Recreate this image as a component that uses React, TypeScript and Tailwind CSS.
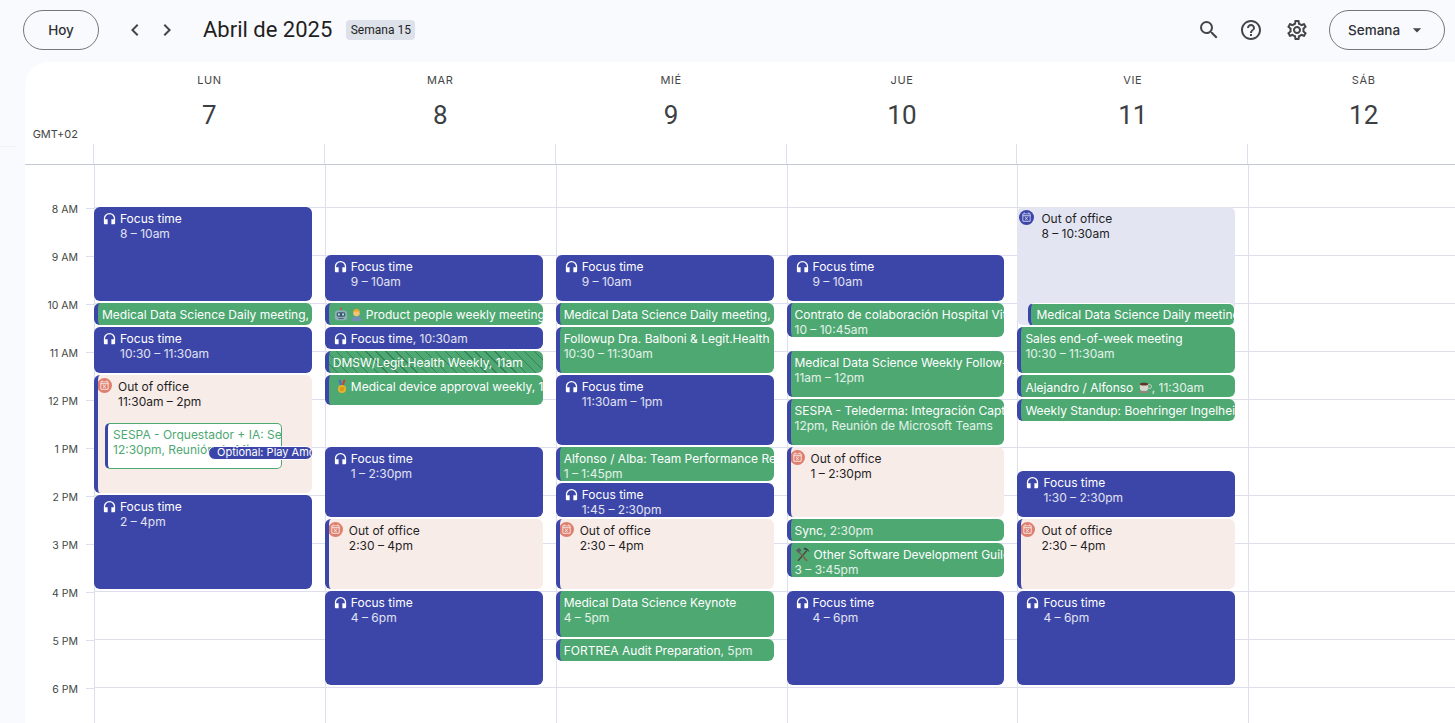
import React from 'react';
import { MdChevronLeft, MdChevronRight, MdSearch, MdHelpOutline, MdOutlineSettings, MdArrowDropDown, MdHeadphones, MdOutlineEventBusy } from 'react-icons/md';

const DAY_HEADS = [
  { name: 'LUN', num: 7 },
  { name: 'MAR', num: 8 },
  { name: 'MIÉ', num: 9 },
  { name: 'JUE', num: 10 },
  { name: 'VIE', num: 11 },
  { name: 'SÁB', num: 12 },
  { name: 'DOM', num: 13 },
];

const HOURS = ['8 AM', '9 AM', '10 AM', '11 AM', '12 PM', '1 PM', '2 PM', '3 PM', '4 PM', '5 PM', '6 PM'];

const RobotEmoji = () => (
  <svg viewBox="0 0 16 16" className="ml-[1px] w-[14px] h-[15px] shrink-0">
    <rect x="7.200" y="0.500" width="1.600" height="3" fill="#8a8f96" />
    <circle cx="8" cy="1.300" r="1.300" fill="#c8553d" />
    <rect x="1" y="3.500" width="14" height="11" rx="3.500" fill="#8fb0bb" />
    <rect x="3" y="5.500" width="10" height="5" rx="2" fill="#3f5561" />
    <circle cx="5.600" cy="8" r="1.300" fill="#9fe3f5" />
    <circle cx="10.400" cy="8" r="1.300" fill="#9fe3f5" />
    <rect x="5" y="12" width="6" height="1.200" fill="#51666f" />
  </svg>
);

const PersonEmoji = () => (
  <svg viewBox="0 0 16 16" className="w-[13px] h-[15px] shrink-0">
    <path d="M1.500 16c0-4 2.500-5.500 6.500-5.500s6.500 1.500 6.500 5.500z" fill="#6f8fb5" />
    <circle cx="8" cy="6" r="4" fill="#f2c27a" />
    <path d="M3.800 6C3.500 2.500 5.500 1 8 1s4.500 1.500 4.200 5C11 4.500 9.500 4 8 4S5 4.500 3.800 6z" fill="#e0a92e" />
  </svg>
);

const MedalEmoji = () => (
  <svg viewBox="0 0 12 16" className="ml-[4px] w-[10px] h-[15px] shrink-0">
    <path d="M1.500 0H4.500L6 6 4.500 8z" fill="#4d6fc4" />
    <path d="M10.500 0H7.500L6 6 7.500 8z" fill="#c9443b" />
    <circle cx="6" cy="11" r="4.800" fill="#eab32d" />
    <circle cx="6" cy="11" r="2.800" fill="#d39a1c" />
  </svg>
);

const ToolsEmoji = () => (
  <svg viewBox="0 0 16 16" className="w-[15px] h-[15px] shrink-0">
    <path d="M2.500 14.500 12 3.500l1 1-9 10.500z" fill="#4a4642" />
    <path d="M13.500 14.500 4 4 3 5l9 10.500z" fill="#7a6450" />
    <path d="M9 1c2.500-.5 5.500 1 6.500 4.500C14 4 12 3 10 3z" fill="#3f4449" />
    <path d="M.8 3.500 4.500.8 7 3.800 3.500 6.500z" fill="#585f66" />
  </svg>
);

const CoffeeEmoji = () => (
  <svg viewBox="0 0 16 16" className="inline-block w-[15px] h-[15px] align-[-2px]">
    <path d="M3 5h9v4a4 4 0 0 1-4 4H7a4 4 0 0 1-4-4z" fill="#d9d6d0" />
    <ellipse cx="7.500" cy="5.500" rx="4.500" ry="1.500" fill="#5c3a24" />
    <path d="M12 6h1.500a1.500 1.500 0 0 1 0 4H12" fill="none" stroke="#d8d4cc" strokeWidth="1" />
    <ellipse cx="7.500" cy="13.800" rx="6.500" ry="1.200" fill="#8f8a80" />
  </svg>
);

type CalEvent = {
  kind: 'focus' | 'green' | 'ooo' | 'away' | 'stripe';
  from: number;
  to: number;
  title?: React.ReactNode;
  time?: string;
  inline?: string;
  icon?: React.ReactNode;
  height?: number;
};

const focus = (from: number, to: number, time: string): CalEvent => ({ kind: 'focus', from, to, time });
const ooo = (from: number, to: number, time: string): CalEvent => ({ kind: 'ooo', from, to, time });

const WEEK: CalEvent[][] = [
  [
    focus(8, 10, '8 – 10am'),
    { kind: 'green', from: 10, to: 10.5, title: 'Medical Data Science Daily meeting, 10am' },
    focus(10.5, 11.5, '10:30 – 11:30am'),
    ooo(11.5, 14, '11:30am – 2pm'),
    focus(14, 16, '2 – 4pm'),
  ],
  [
    focus(9, 10, '9 – 10am'),
    {
      kind: 'green',
      from: 10,
      to: 10.5,
      title: 'Product people weekly meeting, 10am',
      icon: (
        <span className="flex gap-[2px] mr-[-1px]">
          <RobotEmoji />
          <PersonEmoji />
        </span>
      ),
    },
    { kind: 'focus', from: 10.5, to: 11, inline: '10:30am' },
    { kind: 'stripe', from: 11, to: 11.5, title: 'DMSW/Legit.Health Weekly, 11am' },
    { kind: 'green', from: 11.5, to: 12, height: 30, title: 'Medical device approval weekly, 11:30am', icon: <MedalEmoji /> },
    focus(13, 14.5, '1 – 2:30pm'),
    ooo(14.5, 16, '2:30 – 4pm'),
    focus(16, 18, '4 – 6pm'),
  ],
  [
    focus(9, 10, '9 – 10am'),
    { kind: 'green', from: 10, to: 10.5, title: 'Medical Data Science Daily meeting, 10am' },
    { kind: 'green', from: 10.5, to: 11.5, title: 'Followup Dra. Balboni & Legit.Health', time: '10:30 – 11:30am' },
    focus(11.5, 13, '11:30am – 1pm'),
    { kind: 'green', from: 13, to: 13.75, title: 'Alfonso / Alba: Team Performance Review', time: '1 – 1:45pm' },
    focus(13.75, 14.5, '1:45 – 2:30pm'),
    ooo(14.5, 16, '2:30 – 4pm'),
    { kind: 'green', from: 16, to: 17, title: 'Medical Data Science Keynote', time: '4 – 5pm' },
    { kind: 'green', from: 17, to: 17.5, title: 'FORTREA Audit Preparation', inline: '5pm' },
  ],
  [
    focus(9, 10, '9 – 10am'),
    { kind: 'green', from: 10, to: 10.75, title: 'Contrato de colaboración Hospital Vithas', time: '10 – 10:45am' },
    { kind: 'green', from: 11, to: 12, title: 'Medical Data Science Weekly Follow-up', time: '11am – 12pm' },
    { kind: 'green', from: 12, to: 13, title: 'SESPA - Telederma: Integración Captura', time: '12pm, Reunión de Microsoft Teams' },
    ooo(13, 14.5, '1 – 2:30pm'),
    { kind: 'green', from: 14.5, to: 15, title: 'Sync', inline: '2:30pm' },
    { kind: 'green', from: 15, to: 15.75, title: 'Other Software Development Guild', time: '3 – 3:45pm', icon: <ToolsEmoji /> },
    focus(16, 18, '4 – 6pm'),
  ],
  [
    { kind: 'away', from: 8, to: 10.5, time: '8 – 10:30am' },
    { kind: 'green', from: 10.5, to: 11.5, title: 'Sales end-of-week meeting', time: '10:30 – 11:30am' },
    {
      kind: 'green',
      from: 11.5,
      to: 12,
      title: (
        <>
          Alejandro / Alfonso <CoffeeEmoji />
        </>
      ),
      inline: '11:30am',
    },
    { kind: 'green', from: 12, to: 12.5, title: 'Weekly Standup: Boehringer Ingelheim' },
    focus(13.5, 14.5, '1:30 – 2:30pm'),
    ooo(14.5, 16, '2:30 – 4pm'),
    focus(16, 18, '4 – 6pm'),
  ],
  [],
  [],
];

const EventCard = ({ ev }: { ev: CalEvent }) => {
  const top = (ev.from - 8) * 48 + 42;
  const height = ev.height ?? (ev.to - ev.from) * 48 - 2;
  const base = 'absolute -left-px w-[217.9px] rounded-[6px] overflow-hidden pt-[4px] text-[12px] leading-[15px] whitespace-nowrap';
  const style = { top, height };

  if (ev.kind === 'focus') {
    return (
      <div className={`${base} bg-[#3c46a8] text-white pl-[8px]`} style={style}>
        <div className="flex items-center gap-[3px]">
          <MdHeadphones className="w-[15px] h-[15px] -my-px shrink-0" />
          <span>
            Focus time{ev.inline && <span className="text-white/85">, {ev.inline}</span>}
          </span>
        </div>
        {ev.time && <div className="pl-[18px] text-white/85">{ev.time}</div>}
      </div>
    );
  }

  if (ev.kind === 'ooo' || ev.kind === 'away') {
    const away = ev.kind === 'away';
    return (
      <div
        className={`${base} text-[#1f1f1f] ${away ? 'bg-[#e3e5f3] pl-[24px]' : 'bg-[#f8ece9] border-l-[4px] border-[#3c46a8] pl-[20px]'}`}
        style={style}
      >
        <div
          className={`absolute top-[3px] w-[15px] h-[15px] rounded-full flex items-center justify-center ${
            away ? 'left-[2px] bg-[#3c46a8] text-[#cfd3f0]' : 'left-[-1px] bg-[#df7f6e] text-[#f8ece9]'
          }`}
        >
          <MdOutlineEventBusy className="w-[11px] h-[11px]" />
        </div>
        <div>Out of office</div>
        <div>{ev.time}</div>
      </div>
    );
  }

  return (
    <div
      className={`${base} border-l-[4px] border-[#3c46a8] text-white pl-[4px] ${
        ev.kind === 'stripe'
          ? 'bg-[repeating-linear-gradient(45deg,#4ea872,#4ea872_6px,#37805a_6px,#37805a_7px)]'
          : 'bg-[#4ea872]'
      }`}
      style={style}
    >
      <div className="flex items-center gap-[4px]">
        {ev.icon}
        <span>
          {ev.title}
          {ev.inline && <span className="text-white/85">, {ev.inline}</span>}
        </span>
      </div>
      {ev.time && <div className="text-white/85">{ev.time}</div>}
    </div>
  );
};

const App: React.FC = () => {
  return (
    <div className="w-[1455px] h-[723px] overflow-hidden bg-[#f8fafd] flex flex-col font-['Inter',sans-serif]">
      {/* Top bar */}
      <header className="h-[62px] shrink-0 flex items-start pt-[10px] pl-[23px] pr-[10px]">
        <button className="w-[76px] h-[40px] rounded-full border border-[#747775] text-[13.5px] font-medium text-[#303236]">Hoy</button>
        <MdChevronLeft className="ml-[24px] mt-[8px] w-[24px] h-[24px] text-[#444746]" />
        <MdChevronRight className="ml-[8px] mt-[8px] w-[24px] h-[24px] text-[#444746]" />
        <h1 className="ml-[24px] h-[40px] leading-[39px] text-[22px] text-[#1f1f1f] font-normal font-['Roboto',sans-serif]">Abril de 2025</h1>
        <span className="ml-[14px] mt-[10px] h-[20px] w-[69px] rounded-[4px] bg-[#dde1e9] text-[12px] leading-[20px] text-center text-[#1f1f1f] whitespace-nowrap font-['Roboto',sans-serif]">Semana 15</span>
        <div className="ml-auto flex items-center h-[40px]">
          <MdSearch className="w-[24px] h-[24px] text-[#444746]" />
          <MdHelpOutline className="ml-[18px] w-[24px] h-[24px] text-[#444746]" />
          <MdOutlineSettings className="ml-[22px] w-[24px] h-[24px] text-[#444746]" />
          <button className="ml-[20px] w-[116px] h-[40px] rounded-full border border-[#747775] text-[13.5px] font-medium text-[#303236] flex items-center pl-[18px]">
            Semana
            <MdArrowDropDown className="ml-[7px] w-[20px] h-[20px] text-[#444746]" />
          </button>
        </div>
      </header>

      <div className="flex flex-1 min-h-0">
        {/* Collapsed side rail */}
        <div className="w-[25px] shrink-0 pt-[84px]">
          <div className="h-px w-[16px] bg-[#f0f2f6]" />
        </div>

        {/* Calendar card */}
        <main className="flex-1 min-w-0 bg-white rounded-tl-[24px] overflow-hidden flex flex-col">
          <div className="flex h-[82px] shrink-0">
            <div className="w-[69px] shrink-0 flex items-end justify-end pr-[16px] pb-[3px] text-[11px] leading-[14px] text-[#444746]">GMT+02</div>
            {DAY_HEADS.map((d) => (
              <div key={d.name} className="w-[230.85px] shrink-0 flex flex-col items-center pt-[11px]">
                <div className="text-[11px] leading-[14px] tracking-[0.6px] text-[#444746]">{d.name}</div>
                <div className="mt-[10px] text-[26px] leading-[36px] text-[#3c4043] font-['Roboto',sans-serif]">{d.num}</div>
              </div>
            ))}
          </div>

          {/* All-day row */}
          <div className="flex h-[21px] shrink-0 border-b border-[#c4c7d5]">
            <div className="w-[68px] shrink-0" />
            {DAY_HEADS.map((d) => (
              <div key={d.name} className="w-[230.85px] shrink-0 border-l border-[#dde0ec]" />
            ))}
          </div>

          {/* Hour grid */}
          <div className="flex flex-1 min-h-0 overflow-hidden">
            <div className="w-[69px] shrink-0 text-[10.5px] leading-[14px] text-[#444746]">
              <div className="h-[43px] relative">
                <div className="absolute right-[16px] top-[-10px] whitespace-nowrap">7 AM</div>
                <div className="absolute right-0 bottom-[-1px] w-[8px] h-px bg-[#dde0ec]" />
              </div>
              {HOURS.map((h) => (
                <div key={h} className="h-[48px] relative">
                  <div className="absolute right-[16px] top-[-5px] whitespace-nowrap">{h}</div>
                  <div className="absolute right-0 bottom-[-1px] w-[8px] h-px bg-[#dde0ec]" />
                </div>
              ))}
            </div>
            {WEEK.map((events, i) => (
              <div key={i} className="relative w-[230.85px] shrink-0 border-l border-[#dde0ec]">
                <div className="h-[43px] border-b border-[#dde0ec]" />
                {HOURS.map((h) => (
                  <div key={h} className="h-[48px] border-b border-[#dde0ec]" />
                ))}

                {events.map((ev, j) => (
                  <EventCard key={j} ev={ev} />
                ))}

                {i === 0 && (
                  <>
                    <div className="absolute left-[10px] top-[258px] w-[177px] h-[46px] rounded-[5px] bg-white border border-[#4ea872] border-l-[3px] border-l-[#3c46a8] text-[#4ea872] text-[12px] leading-[15px] pl-[5px] pt-[3px] overflow-hidden whitespace-nowrap">
                      <div>SESPA - Orquestador + IA: Seguimiento</div>
                      <div>12:30pm, Reunión de Microsoft Teams</div>
                    </div>
                    <div className="absolute left-[113px] top-[281px] w-[105px] h-[14px] rounded-[7px] bg-[#3c46a8] border border-white text-white text-[11px] leading-[11px] pl-[8px] overflow-hidden whitespace-nowrap">
                      Optional: Play Among Us
                    </div>
                  </>
                )}

                {i === 4 && (
                  <div className="absolute left-[10px] top-[138px] w-[207px] h-[23px] rounded-[6px] border border-white border-l-[3px] border-l-[#3c46a8] bg-[#4ea872] text-white text-[12px] leading-[15px] pl-[5px] pt-[3px] overflow-hidden whitespace-nowrap">
                    Medical Data Science Daily meeting, 10am
                  </div>
                )}
              </div>
            ))}
          </div>
        </main>
      </div>
    </div>
  );
};

export default App;
